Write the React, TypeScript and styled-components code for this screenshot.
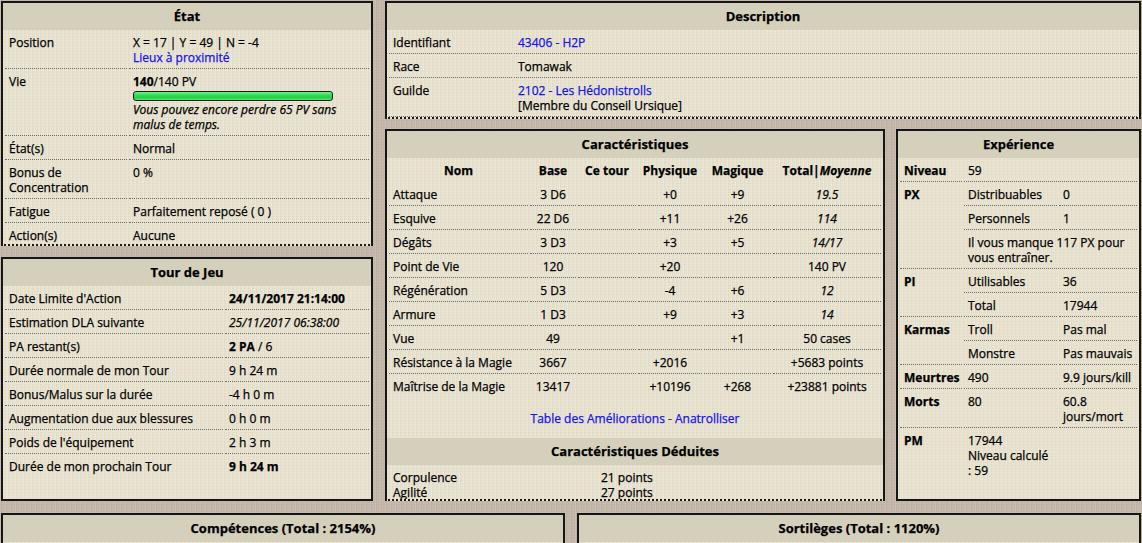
import React from "react";
import styled, { createGlobalStyle, css } from "styled-components";

const GlobalStyle = createGlobalStyle`
  html, body { margin: 0; padding: 0; overflow: hidden; }
  body {
    font-family: "Open Sans", "Liberation Sans", sans-serif;
    font-size: 12px;
    color: #000;
    -webkit-text-stroke: 0.25px currentColor;
    background-color: #c3b6a9;
    background-image:
      repeating-linear-gradient(90deg, rgba(255,255,255,0.08) 0 1px, rgba(0,0,0,0.035) 1px 2px, transparent 2px 5px),
      repeating-linear-gradient(0deg, rgba(255,255,255,0.05) 0 1px, transparent 1px 3px);
  }
`;

const Page = styled.div`
  box-sizing: border-box;
  width: 1142px;
  padding: 1px 1px 0 1px;
  display: flex;
  flex-direction: column;
  gap: 12px;
`;

const TopArea = styled.div`
  display: flex;
  gap: 12px;
  height: 500px;
`;

const LeftCol = styled.div`
  width: 372px;
  flex-shrink: 0;
  display: flex;
  flex-direction: column;
  gap: 11px;
`;

const RightCol = styled.div`
  flex: 1;
  min-width: 0;
  display: flex;
  flex-direction: column;
  gap: 10px;
`;

const LowerRow = styled.div`
  flex: 1;
  min-height: 0;
  display: flex;
  gap: 11px;
`;

const BottomRow = styled.div`
  display: grid;
  grid-template-columns: 1fr 1fr;
  gap: 12px;
  height: 60px;
`;

const Panel = styled.section<{ $clipped?: boolean; $h?: number; $w?: number }>`
  box-sizing: border-box;
  border: 2px solid #151515;
  ${(p) =>
    p.$clipped &&
    css`
      border-bottom: 2px dotted #1a1a1a;
    `}
  background-color: #e8e2cf;
  background-image:
    repeating-linear-gradient(90deg, rgba(255,255,255,0.12) 0 1px, rgba(0,0,0,0.018) 1px 2px, transparent 2px 4px),
    repeating-linear-gradient(0deg, rgba(0,0,0,0.015) 0 1px, transparent 1px 3px);
  overflow: hidden;
  min-width: 0;
  ${(p) => (p.$h ? css`height: ${p.$h}px; flex-shrink: 0;` : css`flex: 1;`)}
  ${(p) => p.$w && css`width: ${p.$w}px; flex: none;`}
`;

const PanelTitle = styled.h2`
  margin: 0;
  height: 27px;
  line-height: 27px;
  text-align: center;
  font-size: 13px;
  font-weight: bold;
  background-color: #d5d0bb;
  white-space: nowrap;
`;

const InfoTable = styled.table`
  width: 100%;
  border-collapse: separate;
  border-spacing: 2px 0;
  table-layout: fixed;
`;

const ColW = styled.col<{ $w?: number }>`
  ${(p) => p.$w && css`width: ${p.$w}px;`}
`;

const cellBase = css`
  padding: 5px 4px 3px;
  line-height: 15px;
  vertical-align: top;
  border-bottom: 1px dotted #6c6c6c;
  font-size: 12px;
`;

const Row = styled.tr<{ $last?: boolean }>`
  ${(p) =>
    p.$last &&
    css`
      & > td {
        border-bottom-color: transparent;
      }
    `}
`;

const Cell = styled.td<{ $center?: boolean; $b?: boolean; $i?: boolean; $nowrap?: boolean; $tightR?: boolean }>`
  ${cellBase}
  text-align: ${(p) => (p.$center ? "center" : "left")};
  font-weight: ${(p) => (p.$b ? "bold" : "normal")};
  font-style: ${(p) => (p.$i ? "italic" : "normal")};
  ${(p) => p.$nowrap && css`white-space: nowrap;`}
  ${(p) => p.$tightR && css`padding-right: 1px;`}
`;

const HeadCell = styled.th`
  ${cellBase}
  border-bottom-color: transparent;
  font-weight: bold;
  text-align: center;
  white-space: nowrap;
`;

const Em = styled.i`
  font-style: italic;
`;

const B = styled.b`
  font-weight: bold;
`;

const Link = styled.a`
  color: #1414ee;
  text-decoration: none;
  cursor: pointer;
`;

const LifeBar = styled.div`
  box-sizing: border-box;
  width: 200px;
  height: 10px;
  margin: 2px 0 1px;
  border: 1px solid #1c1c1c;
  border-radius: 3px;
  background: linear-gradient(#6ff38a, #2fd94f 45%, #27cf46 70%, #4fe86b);
`;

const Note = styled.div`
  font-style: italic;
`;

const LinkLine = styled.div`
  text-align: center;
  padding: 13px 0 12px;
  line-height: 15px;
`;

const Sep = styled.span`
  color: #3a3a3a;
`;

const DeducedGrid = styled.div`
  display: grid;
  grid-template-columns: 208px 1fr;
  padding: 5px 6px 0;
  line-height: 15px;
`;

type CaracRow = [string, string, string, string, string, string, boolean];

const carac: CaracRow[] = [
  ["Attaque", "3 D6", "", "+0", "+9", "19.5", true],
  ["Esquive", "22 D6", "", "+11", "+26", "114", true],
  ["Dégâts", "3 D3", "", "+3", "+5", "14/17", true],
  ["Point de Vie", "120", "", "+20", "", "140 PV", false],
  ["Régénération", "5 D3", "", "-4", "+6", "12", true],
  ["Armure", "1 D3", "", "+9", "+3", "14", true],
  ["Vue", "49", "", "", "+1", "50 cases", false],
  ["Résistance à la Magie", "3667", "", "+2016", "", "+5683 points", false],
  ["Maîtrise de la Magie", "13417", "", "+10196", "+268", "+23881 points", false],
];

function EtatPanel() {
  return (
    <Panel $h={245} $clipped>
      <PanelTitle>État</PanelTitle>
      <InfoTable>
        <colgroup>
          <ColW $w={122} />
          <ColW />
        </colgroup>
        <tbody>
          <Row>
            <Cell>Position</Cell>
            <Cell>
              X = 17 | Y = 49 | N = -4
              <br />
              <Link>Lieux à proximité</Link>
            </Cell>
          </Row>
          <Row>
            <Cell>Vie</Cell>
            <Cell>
              <B>140</B>/140 PV
              <LifeBar />
              <Note>Vous pouvez encore perdre 65 PV sans malus de temps.</Note>
            </Cell>
          </Row>
          <Row>
            <Cell>État(s)</Cell>
            <Cell>Normal</Cell>
          </Row>
          <Row>
            <Cell>Bonus de Concentration</Cell>
            <Cell>0 %</Cell>
          </Row>
          <Row>
            <Cell>Fatigue</Cell>
            <Cell>Parfaitement reposé ( 0 )</Cell>
          </Row>
          <Row>
            <Cell>Action(s)</Cell>
            <Cell>Aucune</Cell>
          </Row>
        </tbody>
      </InfoTable>
    </Panel>
  );
}

function TourPanel() {
  return (
    <Panel>
      <PanelTitle>Tour de Jeu</PanelTitle>
      <InfoTable>
        <colgroup>
          <ColW $w={218} />
          <ColW />
        </colgroup>
        <tbody>
          <Row>
            <Cell>Date Limite d'Action</Cell>
            <Cell $b>24/11/2017 21:14:00</Cell>
          </Row>
          <Row>
            <Cell>Estimation DLA suivante</Cell>
            <Cell $i>25/11/2017 06:38:00</Cell>
          </Row>
          <Row>
            <Cell>PA restant(s)</Cell>
            <Cell>
              <B>2 PA</B> / 6
            </Cell>
          </Row>
          <Row>
            <Cell>Durée normale de mon Tour</Cell>
            <Cell>9 h 24 m</Cell>
          </Row>
          <Row>
            <Cell>Bonus/Malus sur la durée</Cell>
            <Cell>-4 h 0 m</Cell>
          </Row>
          <Row>
            <Cell>Augmentation due aux blessures</Cell>
            <Cell>0 h 0 m</Cell>
          </Row>
          <Row>
            <Cell>Poids de l'équipement</Cell>
            <Cell>2 h 3 m</Cell>
          </Row>
          <Row $last>
            <Cell>Durée de mon prochain Tour</Cell>
            <Cell $b>9 h 24 m</Cell>
          </Row>
        </tbody>
      </InfoTable>
    </Panel>
  );
}

function DescriptionPanel() {
  return (
    <Panel $h={118} $clipped>
      <PanelTitle>Description</PanelTitle>
      <InfoTable>
        <colgroup>
          <ColW $w={123} />
          <ColW />
        </colgroup>
        <tbody>
          <Row>
            <Cell>Identifiant</Cell>
            <Cell>
              <Link>43406 - H2P</Link>
            </Cell>
          </Row>
          <Row>
            <Cell>Race</Cell>
            <Cell>Tomawak</Cell>
          </Row>
          <Row>
            <Cell>Guilde</Cell>
            <Cell>
              <Link>2102 - Les Hédonistrolls</Link>
              <br />
              [Membre du Conseil Ursique]
            </Cell>
          </Row>
        </tbody>
      </InfoTable>
    </Panel>
  );
}

function CaracPanel() {
  return (
    <Panel $w={500} $clipped>
      <PanelTitle>Caractéristiques</PanelTitle>
      <InfoTable>
        <colgroup>
          <ColW $w={139} />
          <ColW $w={46} />
          <ColW $w={58} />
          <ColW $w={64} />
          <ColW $w={67} />
          <ColW />
        </colgroup>
        <thead>
          <tr>
            <HeadCell>Nom</HeadCell>
            <HeadCell>Base</HeadCell>
            <HeadCell>Ce tour</HeadCell>
            <HeadCell>Physique</HeadCell>
            <HeadCell>Magique</HeadCell>
            <HeadCell>
              Total|<Em>Moyenne</Em>
            </HeadCell>
          </tr>
        </thead>
        <tbody>
          {carac.map(([nom, base, tour, phys, mag, total, it], i) => (
            <Row key={nom} $last={i === carac.length - 1}>
              <Cell $nowrap>{nom}</Cell>
              <Cell $center>{base}</Cell>
              <Cell $center>{tour}</Cell>
              <Cell $center>{phys}</Cell>
              <Cell $center>{mag}</Cell>
              <Cell $center $i={it} $nowrap>
                {total}
              </Cell>
            </Row>
          ))}
        </tbody>
      </InfoTable>
      <LinkLine>
        <Link>Table des Améliorations</Link>
        <Sep> - </Sep>
        <Link>Anatrolliser</Link>
      </LinkLine>
      <PanelTitle>Caractéristiques Déduites</PanelTitle>
      <DeducedGrid>
        <span>Corpulence</span>
        <span>21 points</span>
        <span>Agilité</span>
        <span>27 points</span>
      </DeducedGrid>
    </Panel>
  );
}

function ExperiencePanel() {
  return (
    <Panel>
      <PanelTitle>Expérience</PanelTitle>
      <InfoTable>
        <colgroup>
          <ColW $w={62} />
          <ColW $w={93} />
          <ColW />
        </colgroup>
        <tbody>
          <Row>
            <Cell $b $nowrap>Niveau</Cell>
            <Cell colSpan={2}>59</Cell>
          </Row>
          <Row>
            <Cell $b rowSpan={3}>PX</Cell>
            <Cell>Distribuables</Cell>
            <Cell>0</Cell>
          </Row>
          <Row>
            <Cell>Personnels</Cell>
            <Cell>1</Cell>
          </Row>
          <Row>
            <Cell colSpan={2}>Il vous manque 117 PX pour vous entraîner.</Cell>
          </Row>
          <Row>
            <Cell $b rowSpan={2}>PI</Cell>
            <Cell>Utilisables</Cell>
            <Cell>36</Cell>
          </Row>
          <Row>
            <Cell>Total</Cell>
            <Cell>17944</Cell>
          </Row>
          <Row>
            <Cell $b rowSpan={2} $nowrap>Karmas</Cell>
            <Cell>Troll</Cell>
            <Cell $nowrap>Pas mal</Cell>
          </Row>
          <Row>
            <Cell>Monstre</Cell>
            <Cell $nowrap>Pas mauvais</Cell>
          </Row>
          <Row>
            <Cell $b $nowrap>Meurtres</Cell>
            <Cell>490</Cell>
            <Cell $nowrap $tightR>9.9 jours/kill</Cell>
          </Row>
          <Row>
            <Cell $b>Morts</Cell>
            <Cell>80</Cell>
            <Cell>60.8 jours/mort</Cell>
          </Row>
          <Row $last>
            <Cell $b>PM</Cell>
            <Cell>
              17944
              <br />
              Niveau calculé
              <br />: 59
            </Cell>
            <Cell />
          </Row>
        </tbody>
      </InfoTable>
    </Panel>
  );
}

export default function App() {
  return (
    <>
      <GlobalStyle />
      <Page>
        <TopArea>
          <LeftCol>
            <EtatPanel />
            <TourPanel />
          </LeftCol>
          <RightCol>
            <DescriptionPanel />
            <LowerRow>
              <CaracPanel />
              <ExperiencePanel />
            </LowerRow>
          </RightCol>
        </TopArea>
        <BottomRow>
          <Panel>
            <PanelTitle>Compétences (Total : 2154%)</PanelTitle>
          </Panel>
          <Panel>
            <PanelTitle>Sortilèges (Total : 1120%)</PanelTitle>
          </Panel>
        </BottomRow>
      </Page>
    </>
  );
}
